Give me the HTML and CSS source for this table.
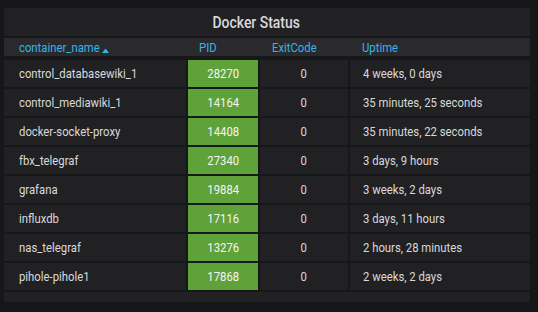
FILE: index.html
```html
<!DOCTYPE html>
<html lang="en">
<head>
<meta charset="utf-8">
<title>Docker Status</title>
<link rel="stylesheet" href="styles.css">
</head>
<body>
<div class="panel">
  <div class="panel-title"><span class="t">Docker Status</span></div>
  <div class="table">
    <div class="thead">
      <div class="th th-name"><span class="t">container_name<svg class="sort" width="9" height="5" viewBox="0 0 9 5"><path d="M0.5 5 L4.5 0.6 L8.5 5 Z" fill="#33b5e5"/></svg></span></div>
      <div class="th th-pid"><span class="t">PID</span></div>
      <div class="th th-exit"><span class="t">ExitCode</span></div>
      <div class="th th-up"><span class="t">Uptime</span></div>
    </div>
    <div class="row"><div class="td name"><span class="t">control_databasewiki_1</span></div><div class="td pid"><span class="t">28270</span></div><div class="td exit"><span class="t">0</span></div><div class="td up"><span class="t">4 weeks, 0 days</span></div></div>
    <div class="row"><div class="td name"><span class="t">control_mediawiki_1</span></div><div class="td pid"><span class="t">14164</span></div><div class="td exit"><span class="t">0</span></div><div class="td up"><span class="t">35 minutes, 25 seconds</span></div></div>
    <div class="row"><div class="td name"><span class="t">docker-socket-proxy</span></div><div class="td pid"><span class="t">14408</span></div><div class="td exit"><span class="t">0</span></div><div class="td up"><span class="t">35 minutes, 22 seconds</span></div></div>
    <div class="row"><div class="td name"><span class="t">fbx_telegraf</span></div><div class="td pid"><span class="t">27340</span></div><div class="td exit"><span class="t">0</span></div><div class="td up"><span class="t">3 days, 9 hours</span></div></div>
    <div class="row"><div class="td name"><span class="t">grafana</span></div><div class="td pid"><span class="t">19884</span></div><div class="td exit"><span class="t">0</span></div><div class="td up"><span class="t">3 weeks, 2 days</span></div></div>
    <div class="row"><div class="td name"><span class="t">influxdb</span></div><div class="td pid"><span class="t">17116</span></div><div class="td exit"><span class="t">0</span></div><div class="td up"><span class="t">3 days, 11 hours</span></div></div>
    <div class="row"><div class="td name"><span class="t">nas_telegraf</span></div><div class="td pid"><span class="t">13276</span></div><div class="td exit"><span class="t">0</span></div><div class="td up"><span class="t">2 hours, 28 minutes</span></div></div>
    <div class="row"><div class="td name"><span class="t">pihole-pihole1</span></div><div class="td pid"><span class="t">17868</span></div><div class="td exit"><span class="t">0</span></div><div class="td up"><span class="t">2 weeks, 2 days</span></div></div>
  </div>
</div>
</body>
</html>
```

FILE: styles.css
```css
html, body {
  margin: 0;
  padding: 0;
  background: #161719;
  font-family: Roboto, "Liberation Sans", sans-serif;
  font-size: 13px;
  color: #d8d9da;
}

body {
  padding: 8px 8px 0 4px;
}

.t {
  display: inline-block;
  white-space: nowrap;
  transform: scaleX(0.87);
  transform-origin: 0 50%;
}

.panel {
  width: 526px;
  height: 294px;
  box-sizing: border-box;
  background: #212124;
  border-radius: 3px;
  display: flex;
  flex-direction: column;
}

.panel-title {
  height: 28px;
  display: flex;
  align-items: center;
  justify-content: center;
  font-size: 16px;
  font-weight: 500;
  color: #d8d9da;
  padding-right: 22px;
}

.panel-title .t {
  transform-origin: 50% 50%;
}

.table {
  background: #161719;
  display: flex;
  flex-direction: column;
  gap: 2px;
  padding: 2px 0;
}

.thead,
.row {
  display: grid;
  grid-template-columns: 182px 70px 88px 1fr;
  column-gap: 2px;
}

.thead {
  background: #2a2a2e;
  height: 18px;
  margin-bottom: 2px;
  align-items: center;
  color: #33b5e5;
}

.th {
  padding-left: 11px;
}

.th-name {
  padding-left: 15px;
}

.sort {
  margin-left: 2px;
  vertical-align: -1px;
}

.th-exit,
.th-up {
  padding-left: 12px;
}

.row {
  height: 27px;
}

.td {
  background: #212124;
  display: flex;
  align-items: center;
}

.name {
  padding-left: 15px;
}

.pid {
  background: #5fa23a;
  color: #f4f5f5;
  justify-content: center;
}

.pid .t,
.exit .t {
  transform-origin: 50% 50%;
}

.exit {
  justify-content: center;
}

.up {
  padding-left: 13px;
}
```
